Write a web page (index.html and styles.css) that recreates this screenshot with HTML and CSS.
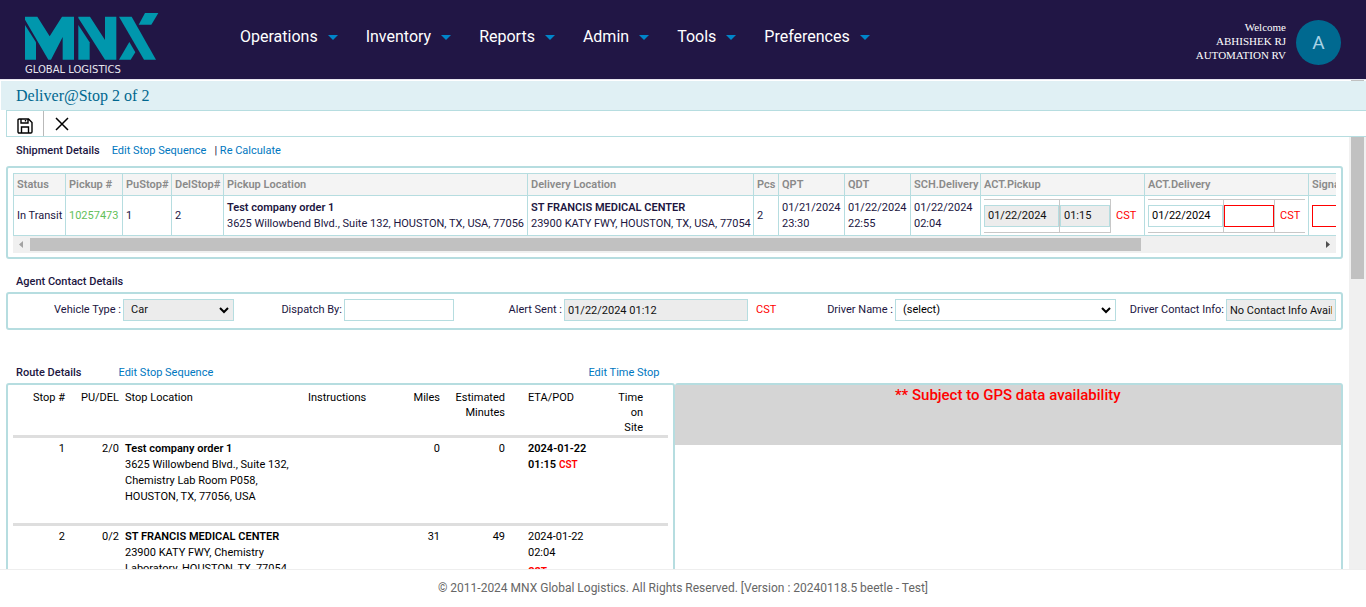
FILE: index.html
```html
<!DOCTYPE html>
<html lang="en">
<head>
<meta charset="utf-8">
<title>Deliver@Stop 2 of 2</title>
<link rel="stylesheet" href="styles.css">
</head>
<body>
<header class="topbar">
  <a class="logo" href="#" aria-label="MNX Global Logistics">
    <svg class="logo-mark" viewBox="0 0 402 141" aria-hidden="true">
      <g fill="#0097ad">
        <path d="M0 11H37L74 70L111 11H147V140H113V72L78 140H70L0 20Z"/>
        <path d="M0 36L33 88V140H0Z"/>
        <path d="M160 11H195L240 81V11H274V140H240L160 15Z"/>
        <path d="M160 36L194 88V140H160Z"/>
        <path d="M282 11H320L393 140H357Z"/>
        <path d="M282 140L313 87L331 118L317 140Z"/>
        <path d="M360 0H400L379 35H341Z"/>
      </g>
    </svg>
    <span class="logo-text">GLOBAL LOGISTICS</span>
  </a>
  <nav class="menu">
    <button class="menu-item" type="button">Operations</button>
    <button class="menu-item" type="button">Inventory</button>
    <button class="menu-item" type="button">Reports</button>
    <button class="menu-item" type="button">Admin</button>
    <button class="menu-item" type="button">Tools</button>
    <button class="menu-item" type="button">Preferences</button>
  </nav>
  <div class="user">
    <div class="user-name">Welcome<br>ABHISHEK RJ<br>AUTOMATION RV</div>
    <div class="avatar">A</div>
  </div>
</header>
<div class="page-strip"><span class="strip-thumb"></span></div>
<h1 class="title">Deliver@Stop 2 of 2</h1>
<div class="toolbar">
  <button class="tool tool-save" type="button" aria-label="Save">
    <svg width="16" height="16" viewBox="0 0 16 16" fill="none" stroke="#000" stroke-width="1.4"><path d="M1 2.2Q1 1 2.2 1H11.5L15 4.5V13.8Q15 15 13.8 15H2.2Q1 15 1 13.8ZM4 1V5H11V1M4.5 15V9H11.5V15M8.5 2V3.6"/></svg>
  </button>
  <button class="tool" type="button" aria-label="Close">
    <svg width="14" height="14" viewBox="0 0 14 14" fill="none" stroke="#000" stroke-width="1.5"><path d="M1 1L13 13M13 1L1 13"/></svg>
  </button>
</div>
<div class="body">
  <main class="content">
    <div class="heading heading-first">
      <h2>Shipment Details</h2>
      <a href="#">Edit Stop Sequence</a>
      <span class="pair">| <a href="#">Re Calculate</a></span>
    </div>
    <section class="panel panel-ship">
      <div class="clip">
        <table class="ship">
          <colgroup>
            <col class="c52"><col class="c57"><col class="c49"><col class="c52"><col class="c304"><col class="c226"><col class="c25"><col class="c66"><col class="c66"><col class="c70"><col class="c164"><col class="c164"><col class="c226">
          </colgroup>
          <thead>
            <tr><th>Status</th><th>Pickup #</th><th>PuStop#</th><th>DelStop#</th><th>Pickup Location</th><th>Delivery Location</th><th>Pcs</th><th>QPT</th><th>QDT</th><th>SCH.Delivery</th><th>ACT.Pickup</th><th>ACT.Delivery</th><th>Signature</th></tr>
          </thead>
          <tbody>
            <tr>
              <td>In Transit</td>
              <td><a class="order" href="#">10257473</a></td>
              <td>1</td>
              <td>2</td>
              <td><b>Test company order 1</b><br>3625 Willowbend Blvd., Suite 132, HOUSTON, TX, USA, 77056</td>
              <td><b>ST FRANCIS MEDICAL CENTER</b><br>23900 KATY FWY, HOUSTON, TX, USA, 77054</td>
              <td>2</td>
              <td>01/21/2024<br>23:30</td>
              <td>01/22/2024<br>22:55</td>
              <td>01/22/2024<br>02:04</td>
              <td>
                <div class="times">
                  <span class="slot"><input class="field date" aria-label="Actual pickup date" value="01/22/2024" disabled></span>
                  <span class="slot"><input class="field time" aria-label="Actual pickup time" value="01:15" disabled></span>
                  <span class="zone">CST</span>
                </div>
              </td>
              <td>
                <div class="times times-open">
                  <span class="slot"><input class="field date" aria-label="Actual delivery date" value="01/22/2024"></span>
                  <span class="slot"><input class="field time required" aria-label="Actual delivery time"></span>
                  <span class="zone">CST</span>
                </div>
              </td>
              <td><input class="field sign required" aria-label="Signature"></td>
            </tr>
          </tbody>
        </table>
      </div>
      <div class="hscroll">
        <svg width="17" height="17" viewBox="0 0 17 17"><path d="M10 5V12L6 8.500Z" fill="#a3a3a3"/></svg>
        <span class="hthumb"></span>
        <svg width="17" height="17" viewBox="0 0 17 17"><path d="M7 5V12L11 8.500Z" fill="#505050"/></svg>
      </div>
    </section>

    <div class="heading heading-agent"><h2>Agent Contact Details</h2></div>
    <section class="panel agent">
      <label for="vehicle">Vehicle Type :</label>
      <span class="select-wrap"><select class="field" id="vehicle" disabled><option>Car</option></select><svg class="chev" width="10" height="7" viewBox="0 0 10 7"><path d="M1 1L5 5L9 1" fill="none" stroke="#000" stroke-width="2"/></svg></span>
      <label for="dispatch">Dispatch By:</label>
      <input class="field" id="dispatch">
      <label for="alert">Alert Sent :</label>
      <input class="field" id="alert" value="01/22/2024 01:12" disabled>
      <span class="zone">CST</span>
      <label for="driver">Driver Name :</label>
      <span class="select-wrap"><select class="field" id="driver"><option>(select)</option></select><svg class="chev" width="10" height="7" viewBox="0 0 10 7"><path d="M1 1L5 5L9 1" fill="none" stroke="#000" stroke-width="2"/></svg></span>
      <label for="contact">Driver Contact Info:</label>
      <input class="field" id="contact" value="No Contact Info Available" disabled>
    </section>

    <div class="heading heading-route">
      <h2>Route Details</h2>
      <a href="#">Edit Stop Sequence</a>
      <a class="edit-time" href="#">Edit Time Stop</a>
    </div>
    <div class="route">
      <section class="panel route-list">
        <table class="stops">
          <colgroup><col class="s52"><col class="s54"><col class="s183"><col class="s84"><col class="s54"><col class="s65"><col class="s81"><col class="s57"><col></colgroup>
          <thead>
            <tr><th class="num">Stop #</th><th class="num">PU/DEL</th><th>Stop Location</th><th>Instructions</th><th class="num">Miles</th><th class="num">Estimated Minutes</th><th class="eta">ETA/POD</th><th class="num">Time<br>on<br>Site</th><th></th></tr>
          </thead>
          <tbody>
            <tr><td class="num">1</td><td class="num">2/0</td><td><b>Test company order 1</b><br>3625 Willowbend Blvd., Suite 132,<br>Chemistry Lab Room P058,<br>HOUSTON, TX, 77056, USA</td><td></td><td class="num">0</td><td class="num">0</td><td class="eta"><b>2024-01-22<br>01:15 <span class="red">CST</span></b></td><td></td><td></td></tr>
            <tr><td class="num">2</td><td class="num">0/2</td><td><b>ST FRANCIS MEDICAL CENTER</b><br>23900 KATY FWY, Chemistry<br>Laboratory, HOUSTON, TX, 77054</td><td></td><td class="num">31</td><td class="num">49</td><td class="eta">2024-01-22<br>02:04<div class="eta-zone">CST</div></td><td></td><td></td></tr>
          </tbody>
        </table>
      </section>
      <section class="panel map"><p class="notice">** Subject to GPS data availability</p></section>
    </div>
  </main>
  <div class="vscroll"><span class="vthumb"></span></div>
</div>
<footer class="footer">© 2011-2024 MNX Global Logistics. All Rights Reserved. [Version : 20240118.5 beetle - Test]</footer>
</body>
</html>
```
FILE: styles.css
```css
* { box-sizing: border-box; }
html, body { height: 100%; }
body {
  margin: 0;
  display: flex;
  flex-direction: column;
  overflow: hidden;
  background: #fff;
  color: #21163f;
  font: 11px/16px Roboto, "Liberation Sans", sans-serif;
}
button, input, select { font: inherit; color: inherit; margin: 0; }
a { color: #0077c0; text-decoration: none; }
h1, h2, p { margin: 0; }
b { font-weight: 600; }

.topbar {
  flex: none;
  display: flex;
  align-items: flex-start;
  height: 79px;
  padding: 0 25px;
  background: #211645;
}
.logo { width: 215px; padding-top: 13px; display: flex; flex-direction: column; }
.logo-mark { width: 134px; height: 47px; }
.logo-text { color: #e8e6ee; font: 10px/12px "DejaVu Sans", sans-serif; margin-top: 4px; white-space: nowrap; }
.menu { display: flex; gap: 28px; padding-top: 27px; }
.menu-item {
  display: flex;
  align-items: center;
  gap: 10px;
  padding: 0;
  border: 0;
  background: none;
  color: #fff;
  font-size: 16px;
  line-height: 20px;
}
.menu-item::after {
  content: "";
  border: 5px solid transparent;
  border-top-color: #0085ca;
  border-bottom: 0;
  margin-top: 1px;
}
.user { margin-left: auto; display: flex; gap: 10px; padding-top: 20px; }
.user-name { color: #fff; text-align: right; font: 11px/14px "Liberation Serif", serif; }
.avatar {
  width: 45px;
  height: 45px;
  border-radius: 50%;
  background: #006990;
  color: #a9d3e6;
  font-size: 19px;
  line-height: 45px;
  text-align: center;
}
.page-strip { flex: none; display: flex; justify-content: flex-end; height: 2px; border-top: 1px solid #e8e6f0; padding-right: 2px; }
.strip-thumb { width: 13px; background: #c1c1c1; }
.title {
  flex: none;
  height: 29px;
  margin-left: 1px;
  padding-left: 15px;
  background: #e0f0f4;
  color: #00678f;
  font: 16px/29px "Liberation Serif", serif;
}
.toolbar {
  flex: none;
  display: flex;
  height: 27px;
  margin-left: 6px;
  border: 1px solid #b6dde0;
  border-right: 0;
}
.tool { display: flex; align-items: center; justify-content: center; width: 36px; padding: 0; border: 0; background: none; }
.tool-save { width: 37px; border-right: 1px solid #b9b9b9; padding-top: 4px; }

.body { flex: 1; min-height: 0; display: flex; overflow: hidden; }
.content { flex: 1; min-width: 0; padding: 0 6px; }
.vscroll { flex: none; width: 17px; padding: 0 2px; background: #f0f0f0; }
.vthumb { display: block; height: 142px; background: #c1c1c1; }

.heading { display: flex; align-items: center; height: 21px; padding: 0 10px; gap: 12px; }
.heading h2 { font-size: 11px; font-weight: 500; line-height: 16px; }
.heading-first { height: 29px; padding-bottom: 2px; }
.pair { margin-left: -4px; }
.heading-agent { margin-top: 12px; }
.heading-route { margin-top: 32px; }
.heading-route a { margin-left: 25px; }
.heading-route .edit-time { margin-left: auto; margin-right: calc(50% + 15px); }

.panel { border: 2px solid #b6dde0; border-radius: 3px; }
.panel-ship { padding: 5px 5px 4px; }
.clip { overflow: hidden; }
.ship { width: 1521px; table-layout: fixed; border-collapse: collapse; }
.c25 { width: 25px; } .c49 { width: 49px; } .c52 { width: 52px; } .c57 { width: 57px; }
.c66 { width: 66px; } .c70 { width: 70px; } .c164 { width: 164px; } .c226 { width: 226px; } .c304 { width: 304px; }
.ship th, .ship td { border: 1px solid #b6dde0; padding: 0 0 0 3px; text-align: left; white-space: nowrap; }
.ship th { height: 22px; background: #f4f4f4; color: #8a8a8a; font-weight: 600; }
.ship td { height: 40px; }
.order { color: #62bf5a; }

.field {
  display: block;
  width: 100%;
  height: 22px;
  padding: 0 3px;
  border: 1px solid #b6dde0;
  border-radius: 0;
  background: #fff;
  color: #000;
}
.field:disabled { background: #ececec; opacity: 1; color: #111; }
.field.required { border-color: #f00; }
.date { width: 75px; }
.time { width: 50px; }
.times { display: flex; }
.slot { padding: 5px 0; border: 1px solid #c8c8c8; border-left: 0; }
.zone { color: #f00; }
.times .zone { padding: 9px 5px 7px; }
.times-open .zone { flex: 1; border: 1px solid #c8c8c8; border-width: 1px 0; padding: 8px 5px 6px; margin-right: 3px; }

.hscroll { display: flex; height: 17px; background: #f0f0f0; }
.hthumb { width: 84%; height: 13px; margin: 2px auto 0 0; background: #c1c1c1; }

.agent {
  display: grid;
  grid-template-columns: 108px 111px 106px 110px 106px 184px 20px 1fr 221px 106px 110px;
  column-gap: 2px;
  padding: 5px 5px 7px;
}
.agent label { text-align: right; white-space: nowrap; line-height: 22px; }
.agent > .zone { padding-left: 6px; line-height: 22px; }
.select-wrap { position: relative; }
.select-wrap .field { appearance: none; padding-left: 7px; }
.chev { position: absolute; right: 5px; top: 8px; }

.route { display: flex; }
.route .panel { width: 50%; height: 260px; }
.route-list { padding: 4px 5px; color: #000; }
.stops { width: 100%; table-layout: fixed; border-collapse: collapse; }
.s52 { width: 52px; } .s54 { width: 54px; } .s183 { width: 183px; } .s84 { width: 84px; }
.s65 { width: 65px; } .s81 { width: 81px; } .s57 { width: 57px; }
.stops th, .stops td { padding: 0 0 0 6px; text-align: left; vertical-align: top; font-weight: 400; white-space: nowrap; }
.stops th { padding-top: 1px; border-bottom: 3px solid #dedede; white-space: normal; line-height: 15px; }
.stops td { height: 88px; padding-top: 3px; border-bottom: 3px solid #dedede; }
.stops .num { text-align: right; padding-left: 0; padding-right: 0; }
.stops .eta { padding-left: 23px; }
.red { color: #f00; font-size: 10px; }
.eta-zone { color: #f00; font-size: 10px; font-weight: 700; padding-top: 3px; }
.map { border-left: 0; }
.notice { height: 60px; background: #d5d5d5; color: #f00; font-size: 15px; font-weight: 500; line-height: 20px; text-align: center; }

.footer {
  flex: none;
  height: 38px;
  border-top: 1px solid #eee;
  background: #fff;
  color: #666;
  font-size: 12px;
  line-height: 36px;
  text-align: center;
}
```
